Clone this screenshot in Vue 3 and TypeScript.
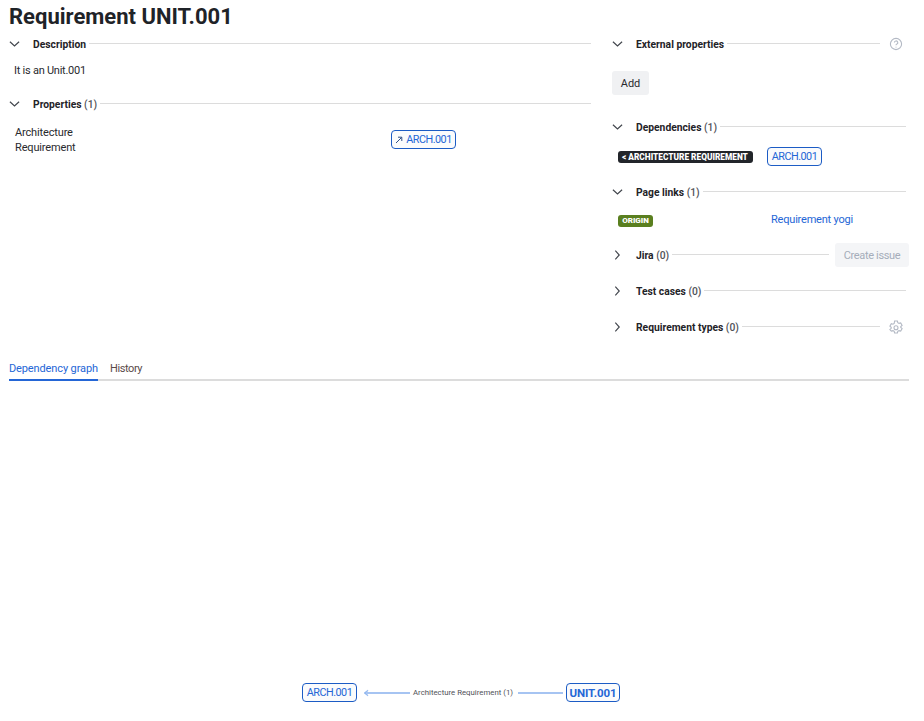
<script setup lang="ts">
</script>

<template>
  <div class="page">
    <h1 class="title">Requirement UNIT.001</h1>
    <div class="columns">
      <div class="left">
        <div class="head">
          <svg class="chev" viewBox="0 0 12 8"><path d="M1 1.5 L6 6 L11 1.5" /></svg>
          <b>Description</b><i class="line"></i>
        </div>
        <p class="desc">It is an Unit.001</p>
        <div class="head props">
          <svg class="chev" viewBox="0 0 12 8"><path d="M1 1.5 L6 6 L11 1.5" /></svg>
          <b>Properties <span>(1)</span></b><i class="line"></i>
        </div>
        <div class="prop-row">
          <div class="prop-name">Architecture<br />Requirement</div>
          <a class="chip prop-chip">
            <svg class="arrow" viewBox="0 0 8 8"><path d="M1 7 L6.5 1.5 M3 1.2 H6.8 V5" /></svg>ARCH.001
          </a>
        </div>
      </div>
      <div class="right">
        <div class="head">
          <svg class="chev" viewBox="0 0 12 8"><path d="M1 1.5 L6 6 L11 1.5" /></svg>
          <b>External properties</b><i class="line short"></i>
          <svg class="tail" viewBox="0 0 14 14"><circle cx="7" cy="7" r="5.6" /><path d="M5.4 5.6a1.7 1.7 0 1 1 2.5 1.5c-.6.3-.9.6-.9 1.2" /><path d="M7 9.8v.8" /></svg>
        </div>
        <button class="btn">Add</button>
        <div class="head dep">
          <svg class="chev" viewBox="0 0 12 8"><path d="M1 1.5 L6 6 L11 1.5" /></svg>
          <b>Dependencies <span>(1)</span></b><i class="line"></i>
        </div>
        <div class="dep-row">
          <span class="lozenge dark">&lt; Architecture requirement</span>
          <a class="chip dep-chip">ARCH.001</a>
        </div>
        <div class="head links">
          <svg class="chev" viewBox="0 0 12 8"><path d="M1 1.5 L6 6 L11 1.5" /></svg>
          <b>Page links <span>(1)</span></b><i class="line"></i>
        </div>
        <div class="link-row">
          <span class="lozenge green">Origin</span>
          <a class="plain">Requirement yogi</a>
        </div>
        <div class="head jira">
          <svg class="chev" viewBox="0 0 8 12"><path d="M1.5 1 L6 6 L1.5 11" /></svg>
          <b>Jira <span>(0)</span></b><i class="line"></i>
          <button class="btn disabled">Create issue</button>
        </div>
        <div class="head tests">
          <svg class="chev" viewBox="0 0 8 12"><path d="M1.5 1 L6 6 L1.5 11" /></svg>
          <b>Test cases <span>(0)</span></b><i class="line"></i>
        </div>
        <div class="head types">
          <svg class="chev" viewBox="0 0 8 12"><path d="M1.5 1 L6 6 L1.5 11" /></svg>
          <b>Requirement types <span>(0)</span></b><i class="line short"></i>
          <svg class="tail" viewBox="0 0 14 14"><path d="M5.6 1h2.8l.4 1.7 1.2.7 1.7-.5 1.4 2.4-1.3 1.2v1l1.3 1.2-1.4 2.4-1.7-.5-1.2.7-.4 1.7H5.6l-.4-1.7-1.2-.7-1.7.5L.9 9.5l1.3-1.2v-1L.9 6.1l1.4-2.4 1.7.5 1.2-.7z" /><circle cx="7" cy="7.8" r="2" /></svg>
        </div>
      </div>
    </div>
    <div class="tabs">
      <span class="tab active">Dependency graph</span>
      <span class="tab history">History</span>
    </div>
    <div class="graph">
      <a class="chip node">ARCH.001</a>
      <svg class="arrowhead" viewBox="0 0 6 8"><path d="M5 1 L1 4 L5 7 L3.5 4 Z" /></svg>
      <i class="edge first"></i>
      <span class="edge-label">Architecture Requirement (1)</span>
      <i class="edge second"></i>
      <a class="chip node strong">UNIT.001</a>
    </div>
  </div>
</template>

<style>
html, body { background: #fff; }
</style>

<style scoped>
.page {
  width: 900px;
  height: 721px;
  margin-left: 9px;
  font-family: Roboto, "Noto Sans", sans-serif;
  font-size: 11px;
  color: #292a2e;
  overflow: hidden;
}
.title {
  margin: 0;
  height: 31px;
  padding-top: 1px;
  font-size: 22px;
  line-height: 31px;
  font-weight: 700;
  color: #1f2328;
}
.columns { display: flex; height: 325px; }
.left { width: 582px; margin-right: 21px; }
.right { width: 294px; }
.head {
  display: flex;
  align-items: center;
  height: 24px;
  font-size: 10.3px;
  color: #1f2328;
}
.head b { font-weight: 700; white-space: nowrap; }
.head b span { font-weight: 500; color: #505258; }
.line { flex: 1; height: 1px; background: #dcdcdc; margin: -2px 0 0 3px; }
.line.short { margin-right: 9px; }
.chev {
  width: 11px;
  height: 8px;
  margin-right: 13px;
  fill: none;
  stroke: #42464d;
  stroke-width: 1.3;
  flex: none;
}
.right .jira .chev, .right .tests .chev, .right .types .chev {
  width: 7px;
  height: 12px;
  margin-left: 2px;
  margin-right: 15px;
}
.desc { margin: 8px 0 0 5px; height: 28px; line-height: 14px; font-size: 11px; letter-spacing: -0.25px; }
.prop-row { display: flex; margin-top: 7px; padding-left: 6px; }
.prop-name { width: 376px; line-height: 15px; font-size: 11px; letter-spacing: -0.15px; padding-top: 2px; }
.prop-chip { margin-top: 7px; height: 20px; width: 65px; }
.chip {
  display: inline-flex;
  align-items: center;
  justify-content: center;
  box-sizing: border-box;
  height: 19px;
  padding: 0;
  border: 1px solid #1c5cc5;
  border-radius: 4px;
  background: #fafbfc;
  color: #2466d6;
  font-size: 10.8px;
  letter-spacing: -0.5px;
  white-space: nowrap;
}
.arrow { width: 8px; height: 8px; margin-right: 3px; fill: none; stroke: #2f4f86; stroke-width: 1; flex: none; }
.btn {
  display: block;
  border: 0;
  border-radius: 3px;
  background: #f0f1f3;
  color: #292a2e;
  font: inherit;
  font-size: 11px;
  height: 24px;
  width: 37px;
  padding: 0;
  margin-top: 15px;
}
.btn.disabled {
  width: 74px;
  margin: 0 0 0 3px;
  color: #a5adba;
  background: #f4f5f7;
  letter-spacing: -0.35px;
  flex: none;
  position: relative;
  left: 3px;
}
.tail { width: 14px; height: 14px; flex: none; margin-right: 3px; fill: none; stroke: #b3b9c4; stroke-width: 1.1; }
.dep { margin-top: 20px; }
.dep-row { display: flex; align-items: center; margin-top: 8px; padding-left: 6px; height: 19px; }
.dep-chip { width: 55px; }
.lozenge {
  display: inline-block;
  height: 12px;
  line-height: 12px;
  border-radius: 3px;
  font-size: 8px;
  font-weight: 900;
  text-transform: uppercase;
  color: #fff;
  white-space: nowrap;
  box-sizing: border-box;
}
.dark { background: #22252a; width: 135px; margin-right: 14px; padding: 0 4px; font-size: 8.3px; }
.green { background: #5a7f1f; width: 35px; text-align: center; }
.links { margin-top: 14px; }
.link-row { display: flex; align-items: center; padding-left: 6px; height: 19px; margin-top: 7px; }
.plain { margin-left: 118px; margin-top: -2px; color: #2466d6; font-size: 11px; letter-spacing: -0.2px; }
.jira { margin-top: 13px; }
.tests { margin-top: 12px; }
.types { margin-top: 12px; }
.tabs {
  display: flex;
  gap: 12px;
  height: 22px;
  width: 900px;
  border-bottom: 2px solid #dcdcdc;
}
.tab { height: 22px; line-height: 24px; font-size: 11px; color: #5b4a4a; letter-spacing: -0.12px; }
.history { letter-spacing: -0.4px; }
.tab.active { color: #2466d6; border-bottom: 2px solid #2466d6; }
.graph {
  display: flex;
  align-items: center;
  height: 19px;
  margin-top: 302px;
  padding-left: 293px;
}
.node { width: 55px; flex: none; }
.strong { font-weight: 700; width: 54px; font-size: 11.5px; letter-spacing: -0.1px; }
.arrowhead { width: 6px; height: 8px; fill: #8fb5ef; stroke: #8fb5ef; stroke-width: 0.6; margin-left: 6px; flex: none; }
.edge { height: 2px; background: #a6c4f2; display: block; flex: none; }
.edge.first { width: 44px; margin-left: -3px; }
.edge.second { width: 45px; }
.edge-label { font-size: 7.8px; color: #505258; margin: 0 5px 0 3px; white-space: nowrap; }
.edge.second + .node { margin-left: 3px; }
</style>
